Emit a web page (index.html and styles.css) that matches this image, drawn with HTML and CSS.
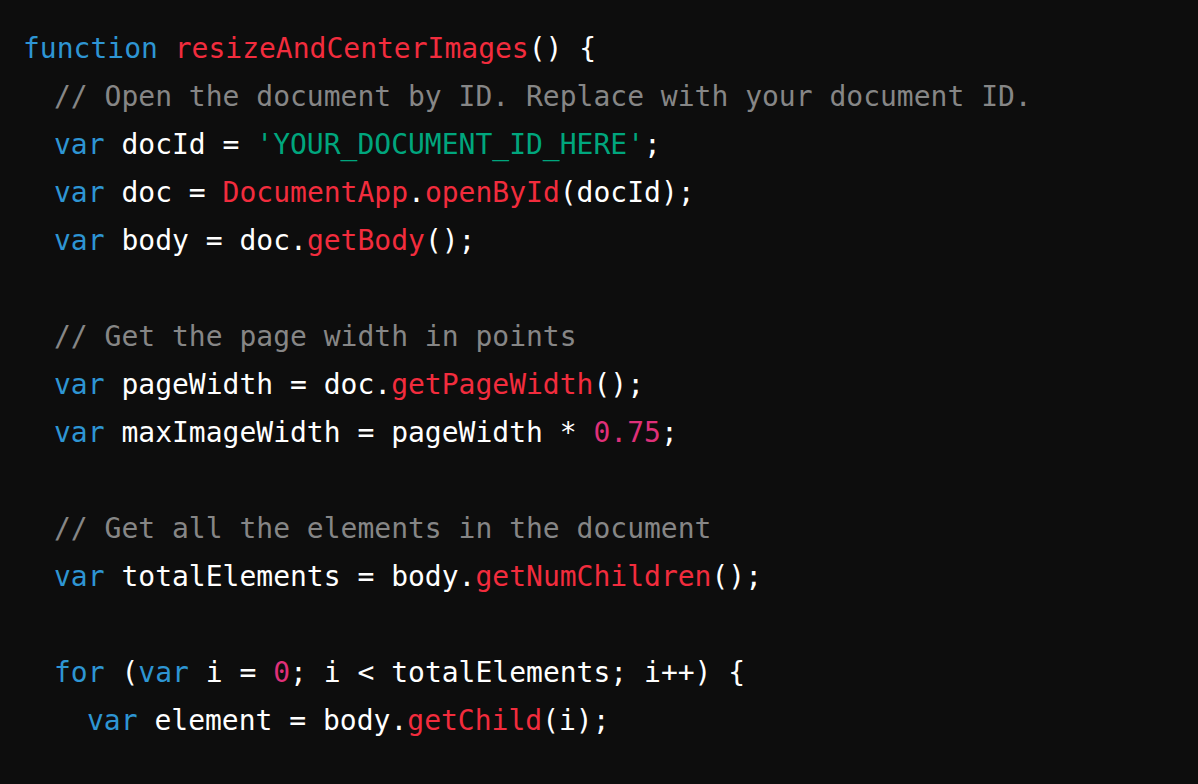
FILE: index.html
```html
<!DOCTYPE html>
<html>
<head>
<meta charset="utf-8">
<link rel="stylesheet" href="styles.css">
</head>
<body>
<div class="code">
<div class="line"><span class="kw">function</span> <span class="fn">resizeAndCenterImages</span>() {</div>
<div class="line i1"><span class="cm">// Open the document by ID. Replace with your document ID.</span></div>
<div class="line i1"><span class="kw">var</span> docId = <span class="str">'YOUR_DOCUMENT_ID_HERE'</span>;</div>
<div class="line i1"><span class="kw">var</span> doc = <span class="fn">DocumentApp</span>.<span class="fn">openById</span>(docId);</div>
<div class="line i1"><span class="kw">var</span> body = doc.<span class="fn">getBody</span>();</div>
<div class="line"></div>
<div class="line i1"><span class="cm">// Get the page width in points</span></div>
<div class="line i1"><span class="kw">var</span> pageWidth = doc.<span class="fn">getPageWidth</span>();</div>
<div class="line i1"><span class="kw">var</span> maxImageWidth = pageWidth * <span class="num">0.75</span>;</div>
<div class="line"></div>
<div class="line i1"><span class="cm">// Get all the elements in the document</span></div>
<div class="line i1"><span class="kw">var</span> totalElements = body.<span class="fn">getNumChildren</span>();</div>
<div class="line"></div>
<div class="line i1"><span class="kw">for</span> (<span class="kw">var</span> i = <span class="num">0</span>; i &lt; totalElements; i++) {</div>
<div class="line i2"><span class="kw">var</span> element = body.<span class="fn">getChild</span>(i);</div>
</div>
</body>
</html>
```

FILE: styles.css
```css
html, body {
  margin: 0;
  padding: 0;
  background: #0d0d0d;
  width: 1198px;
  height: 784px;
  overflow: hidden;
}
.code {
  padding: 25px 0 0 23px;
  font-family: "DejaVu Sans Mono", monospace;
  font-size: 28px;
  line-height: 48px;
  color: #ffffff;
}
.line {
  height: 48px;
  white-space: pre;
}
.i1 { padding-left: 31px; }
.i2 { padding-left: 64px; }
.kw { color: #2e95d3; }
.fn { color: #f22c3d; }
.str { color: #00a67d; }
.num { color: #df3079; }
.cm { color: #868686; }
```
